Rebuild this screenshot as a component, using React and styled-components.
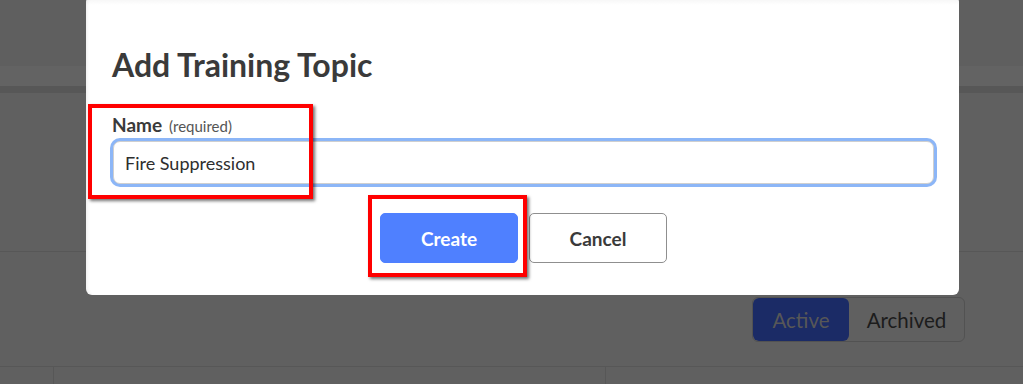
import React, { useState } from "react";
import styled, { createGlobalStyle } from "styled-components";

const GlobalStyle = createGlobalStyle`
  html, body {
    margin: 0;
    padding: 0;
    background: #606060;
    font-family: Lato, "Open Sans", sans-serif;
  }
  * { box-sizing: border-box; }
`;

// dimmed page behind the modal
const Page = styled.div`
  position: relative;
  width: 1023px;
  height: 384px;
  overflow: hidden;
  background: #606060;
  display: flex;
  flex-direction: column;
`;

const TopBar = styled.div`
  height: 66px;
  background: #5f5f5f;
`;

const SubBar = styled.div`
  height: 20px;
  background: #636363;
`;

const Rule = styled.div`
  height: 7px;
  background: #575757;
`;

const Section = styled.div`
  height: 159px;
  border-bottom: 1px solid #575757;
`;

const Toolbar = styled.div`
  height: 114px;
  display: flex;
  justify-content: flex-end;
  align-items: flex-start;
  padding: 45px 58px 0 0;
`;

const Toggle = styled.div`
  display: flex;
  border: 1px solid #525252;
  border-radius: 6px;
  overflow: hidden;
`;

const ToggleItem = styled.button`
  height: 43px;
  width: ${(p) => (p.active ? "96px" : "115px")};
  padding: 0;
  border: none;
  border-radius: ${(p) => (p.active ? "6px" : "0")};
  background: ${(p) => (p.active ? "#1b2b66" : "transparent")};
  color: ${(p) => (p.active ? "#575757" : "#1c1c1c")};
  font-family: Lato, sans-serif;
  font-size: 20.5px;
  cursor: pointer;
`;

const TableHead = styled.div`
  flex: 1;
  display: grid;
  grid-template-columns: 53px 552px 1fr;
  border-top: 1px solid #575757;
`;

const HeadCell = styled.div`
  border-left: ${(p) => (p.first ? "none" : "1px solid #575757")};
`;

// modal
const Modal = styled.div`
  position: absolute;
  left: 86px;
  top: -4px;
  width: 873px;
  height: 299px;
  background: linear-gradient(#f1f1f1, #ffffff 9px);
  border-radius: 6px;
  box-shadow: inset 3px 0 4px -3px rgba(0, 0, 0, 0.12);
  padding: 50px 22px 0 26px;
  display: flex;
  flex-direction: column;
`;

const Title = styled.h2`
  margin: 0;
  font-size: 32px;
  line-height: 38px;
  font-weight: 700;
  color: #3a3a3a;
`;

const Field = styled.div`
  margin-top: 30px;
  display: flex;
  flex-direction: column;
`;

const Label = styled.label`
  font-size: 19px;
  font-weight: 700;
  color: #3a3a3a;
  line-height: 22px;
`;

const Hint = styled.span`
  font-size: 15px;
  font-weight: 400;
  color: #555;
  margin-left: 7px;
`;

const Input = styled.input`
  margin: 4px 0 0 1px;
  height: 43px;
  width: 821px;
  padding: 0 11px;
  border: 1px solid #cfcfcf;
  border-radius: 7px;
  box-shadow: 0 0 0 3px #8cb6f7;
  outline: none;
  font-family: Lato, sans-serif;
  font-size: 18px;
  color: #2e2e2e;
  caret-color: #222;
`;

const Actions = styled.div`
  margin-top: 29px;
  display: flex;
  justify-content: center;
  gap: 11px;
  padding-right: 2px;
`;

const Button = styled.button`
  width: 138px;
  height: 50px;
  border-radius: 5px;
  font-family: Lato, sans-serif;
  font-size: 19px;
  font-weight: 700;
  cursor: pointer;
  border: 1px solid ${(p) => (p.primary ? "#4f80ff" : "#8f8f8f")};
  background: ${(p) => (p.primary ? "#4f80ff" : "#ffffff")};
  color: ${(p) => (p.primary ? "#ffffff" : "#3a3a3a")};
`;

// red annotation boxes drawn over the screenshot
const Highlight = styled.div`
  position: absolute;
  border: 4px solid #ff0000;
  box-shadow: 2px 2px 3px rgba(0, 0, 0, 0.55);
  pointer-events: none;
`;

export default function App() {
  const [name, setName] = useState("Fire Suppression");

  return (
    <>
      <GlobalStyle />
      <Page>
        <TopBar />
        <SubBar />
        <Rule />
        <Section />
        <Toolbar>
          <Toggle>
            <ToggleItem active>Active</ToggleItem>
            <ToggleItem>Archived</ToggleItem>
          </Toggle>
        </Toolbar>
        <TableHead>
          <HeadCell first />
          <HeadCell />
          <HeadCell />
        </TableHead>

        <Modal>
          <Title>Add Training Topic</Title>
          <Field>
            <Label>
              Name<Hint>(required)</Hint>
            </Label>
            <Input
              autoFocus
              value={name}
              onChange={(e) => setName(e.target.value)}
            />
          </Field>
          <Actions>
            <Button primary>Create</Button>
            <Button>Cancel</Button>
          </Actions>
        </Modal>

        <Highlight style={{ left: 88, top: 104, width: 225, height: 95 }} />
        <Highlight style={{ left: 368, top: 195, width: 159, height: 82 }} />
      </Page>
    </>
  );
}
